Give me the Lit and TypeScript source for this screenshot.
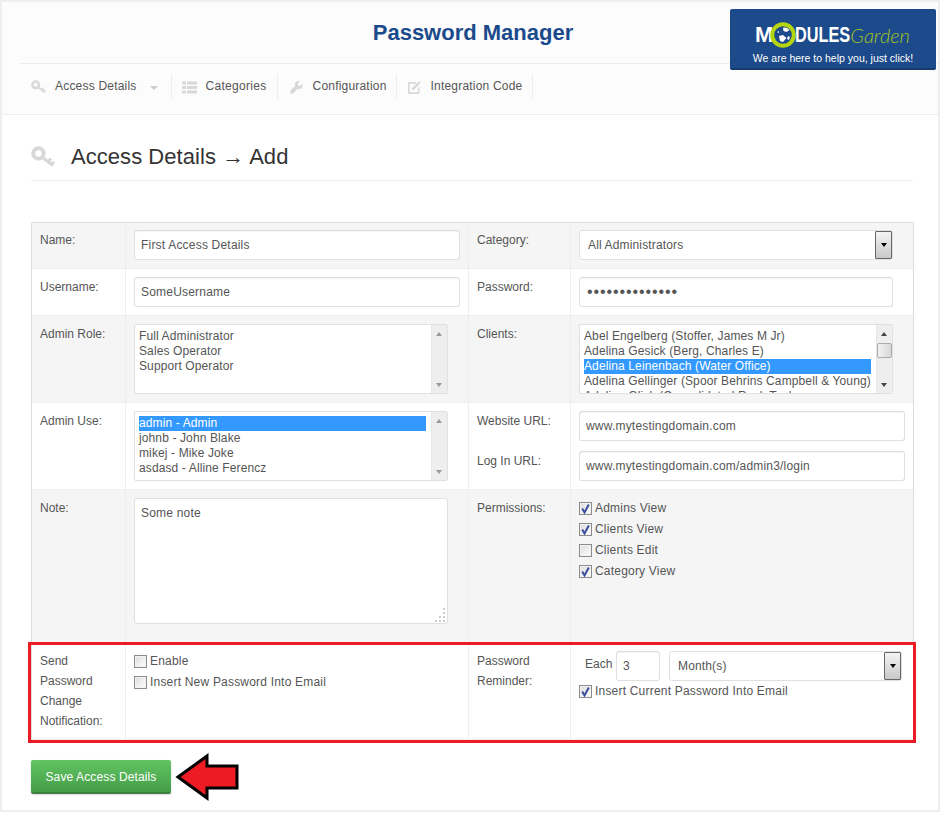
import { LitElement, html, css, svg } from "lit";
import { customElement } from "lit/decorators.js";

const keyIcon = (cls: string) => html`<svg class=${cls} viewBox="0 0 24 22" aria-hidden="true">
  <circle cx="7.5" cy="7.5" r="5.2" fill="none" stroke="currentColor" stroke-width="4"/>
  <path d="M11.5 11.5 L22 19.5 M17 15.5 L20 12.5 M20.5 18.2 L23 15.8" fill="none" stroke="currentColor" stroke-width="3"/>
</svg>`;
const listIcon = html`<svg class="nic" viewBox="0 0 15 12" aria-hidden="true"><path fill="currentColor" d="M0 0h4v3H0zM5 0h10v3H5zM0 4.5h4v3H0zM5 4.5h10v3H5zM0 9h4v3H0zM5 9h10v3H5z"/></svg>`;
const wrenchIcon = html`<svg class="nic" viewBox="0 0 14 14" aria-hidden="true"><path fill="currentColor" d="M13.6 2.8 11 5.3 8.9 4.9 8.5 2.8 11 .3C9.300-.3 7.500 0 6.400 1.200 5.200 2.400 5 4 5.500 5.400L.6 10.300c-.8.800-.8 2.100 0 2.900s2.100.8 2.900 0L8.400 8.400c1.500.5 3.100.2 4.200-.9 1.200-1.200 1.500-3.100 1-4.700z"/></svg>`;
const editIcon = html`<svg class="nic" viewBox="0 0 15 14" aria-hidden="true"><path fill="none" stroke="currentColor" stroke-width="1.800" d="M9 2H1.500v11h10.500V7"/><path fill="currentColor" d="M5 7.500 11.500.8l2 2L7 9.300l-2.500.6zM12.300 0l2 2 .7-.7-2-2z"/></svg>`;

const check = (on: boolean) => html`<span class="cb">${on
  ? svg`<svg viewBox="0 0 11 11" aria-hidden="true"><path d="M2.200 5.500 4.500 9.500 8.800 1.500" fill="none" stroke="#3b4f9e" stroke-width="2"/></svg>`
  : ""}</span>`;
const chk = (label: string, on: boolean) => html`<label class="chk">${check(on)}<span>${label}</span></label>`;

const up = html`<span class="up"></span>`;
const down = html`<span class="down"></span>`;
const selBtn = html`<span class="selbtn"><span class="caret"></span></span>`;

@customElement("app-root")
export class AppRoot extends LitElement {
  static styles = css`
    :host { display: block; width: 941px; height: 813px; background: #fff; overflow: hidden; position: relative;
      font: 12px/20px "Liberation Sans", Arial, sans-serif; color: #555; }
    * { box-sizing: border-box; }
    .panel { width: 940px; height: 812px; border: 2px solid #eee; background: #fff; }
    .top { background: #fcfcfc; border-bottom: 1px solid #eee; height: 113px; }
    .titlebar { height: 62px; margin-left: 18px; border-bottom: 1px solid #eee; padding: 12px 12px 0 0; text-align: center; }
    h1 { margin: 0; font-size: 22px; line-height: 38px; font-weight: 700; color: #1b4a8c; }
    nav { display: flex; margin-left: 18px; padding-top: 10px; align-items: flex-start; }
    .ni { display: flex; align-items: center; height: 26px; border-right: 1px solid #eee; padding: 0 10px 2px; color: #555; letter-spacing: .2px; }
    .ni.first { padding: 0 13px 2px 11px; }
    .ni.cat { letter-spacing: .3px; }
    .ni.wr { padding-left: 11px; padding-right: 9px; }
    .nic { width: 15px; height: 13px; color: #d8d8d8; margin-right: 9px; flex: none; margin-top: 2px; }
    .navkey { width: 15px; height: 14px; color: #d8d8d8; margin-right: 9px; flex: none; margin-top: 2px; }
    .navcaret { width: 0; height: 0; border: 4px solid transparent; border-top-color: #ccc; border-bottom: 0; margin: 3px 0 0 13px; }
    .logo { position: absolute; left: 730px; top: 9px; width: 206px; height: 61px; background: #1c4a8a; border-bottom: 2px solid #163a70; border-radius: 2px; color: #fff; overflow: hidden; }
    .logo .brand { display: flex; align-items: center; height: 26px; margin: 13px 0 0 25px; font: 700 22px/26px "Liberation Sans", sans-serif; }
    .logo .ring { width: 26px; height: 26px; flex: none; margin: 0 -1px 0 -3px; position: relative; }
    .logo .mods { display: block; width: 54px; transform: scaleX(.74); transform-origin: left center; white-space: nowrap; }
    .logo .gard { font: italic 300 20px/26px Lato, sans-serif; color: #a3c41d; margin-left: 1px; }
    .logo .tag { text-align: center; font-size: 10.500px; line-height: 14px; margin-top: 3px; }
    .heading { display: flex; align-items: flex-start; margin: 0 25px 0 29px; height: 66px; padding-top: 27px; border-bottom: 1px solid #eee; }
    .hkey { width: 24px; height: 22px; color: #d8d8d8; margin: 4px 16px 0 0; flex: none; }
    h2 { margin: 0; font-size: 22px; font-weight: 400; color: #333; line-height: 30px; letter-spacing: .05px; }
    .tbl { display: grid; grid-template-columns: 94px 343px 102px 342px; grid-template-rows: 46px 47px 87px 87px 154px 96px;
      width: 883px; margin: 41px 0 0 29px; border: 1px solid #ddd; border-bottom: 0; border-radius: 2px 2px 0 0; }
    .c { border-right: 1px solid #eee; border-bottom: 1px solid #eee; padding: 8px; min-width: 0; }
    .c:nth-child(4n) { border-right: 0; }
    .g { background: #f5f5f5; }
    .r1 { padding-top: 7px; }
    .r6 { padding-top: 7px; }
    input.t { display: block; width: 326px; height: 30px; border: 1px solid #e0e0e0; border-top-color: #ddd; border-radius: 3px; background: #fff;
      box-shadow: inset 0 1px 1px rgba(0,0,0,.05); font: 12px "Liberation Sans", Arial, sans-serif; color: #555; padding: 0 6px; outline: none; letter-spacing: .2px; }
    input.pw { width: 314px; font-size: 16px; letter-spacing: .9px; padding-left: 7px; }
    .sel { display: flex; align-items: center; justify-content: space-between; width: 314px; height: 30px; border: 1px solid #e0e0e0; border-radius: 3px; background: #fff; padding-left: 8px; color: #555; letter-spacing: .15px; }
    .selbtn { display: flex; align-items: center; justify-content: center; width: 17px; height: 28px; border: 1px solid #666; border-radius: 1px; background: linear-gradient(#f4f4f4, #c8c8c8); flex: none; }
    .caret { width: 0; height: 0; border: 3.500px solid transparent; border-top: 4px solid #000; border-bottom: 0; }
    .list { display: flex; width: 314px; height: 70px; border: 1px solid #e0e0e0; border-radius: 2px; background: #fff; overflow: hidden; }
    .opts { flex: 1; min-width: 0; padding: 4px 5px 0 4px; line-height: 15px; overflow: hidden; white-space: nowrap; letter-spacing: .12px; }
    .opts div { height: 15px; }
    .opts .on { background: #3399ff; color: #fff; }
    .sb { position: relative; flex: none; width: 16px; background: #eee; border-left: 1px solid #e6e6e6; }
    .up, .down { position: absolute; left: 4px; width: 0; height: 0; border: 3.500px solid transparent; }
    .up { top: 7px; border-top: 0; border-bottom: 4px solid #999; }
    .down { bottom: 6px; border-bottom: 0; border-top: 4px solid #999; }
    .sb.active .up { border-bottom-color: #444; }
    .sb.active .down { border-top-color: #444; }
    .thumb { position: absolute; left: 0; top: 18px; width: 15px; height: 15px; border: 1px solid #aaa; border-radius: 2px; background: linear-gradient(90deg, #f2f2f2, #d8d8d8); }
    .ta { display: block; position: relative; width: 314px; height: 126px; border: 1px solid #e0e0e0; border-radius: 3px; background: #fff; padding: 4px 6px; letter-spacing: .2px; }
    .grip { position: absolute; right: 1px; bottom: 1px; width: 12px; height: 14px; }
    .urlgap { height: 10px; }
    .lgap { height: 20px; }
    .chk { display: flex; align-items: center; height: 21px; padding-bottom: 2px; letter-spacing: .2px; }
    .cb { display: block; width: 13px; height: 13px; border: 1px solid #8c8c8c; background: linear-gradient(135deg, #dcdcdc, #fff); box-shadow: inset 0 0 0 1px #f2f2f2; margin-right: 3px; flex: none; margin-top: 2px; }
    .cb svg { display: block; width: 11px; height: 11px; }
    .each { display: flex; align-items: flex-start; padding-left: 6px; height: 30px; }
    .each .lb { width: 31px; line-height: 26px; }
    .each input.t { width: 44px; height: 30px; padding: 0 6px; }
    .each .sel { width: 233px; margin-left: 9px; }
    .foot { margin: 20px 0 0 29px; }
    button { display: block; width: 140px; height: 34px; border: 0; border-bottom: 2px solid #3d8040; border-radius: 2px; background: linear-gradient(#62c462, #449d48); color: #fff; font: 12px "Liberation Sans", Arial, sans-serif; letter-spacing: .12px; padding: 2px 0 0; box-shadow: 0 1px 2px rgba(0,0,0,.15); }
    .redbox { position: absolute; left: 28px; top: 642px; width: 888px; height: 101px; border: 3px solid #ed1c24; pointer-events: none; }
    .arrow { position: absolute; left: 175px; top: 752px; width: 66px; height: 50px; }
  `;

  render() {
    return html`
      <div class="panel">
        <div class="top">
          <div class="titlebar"><h1>Password Manager</h1></div>
          <nav>
            <a class="ni first">${keyIcon("navkey")}Access Details<span class="navcaret"></span></a>
            <a class="ni cat">${listIcon}Categories</a>
            <a class="ni wr">${wrenchIcon}Configuration</a>
            <a class="ni">${editIcon}Integration Code</a>
          </nav>
        </div>
        <div class="heading">${keyIcon("hkey")}<h2>Access Details → Add</h2></div>
        <div class="tbl">
          <div class="c g r1">Name:</div>
          <div class="c g r1"><input class="t" value="First Access Details"></div>
          <div class="c g r1">Category:</div>
          <div class="c g r1"><div class="sel">All Administrators${selBtn}</div></div>

          <div class="c">Username:</div>
          <div class="c"><input class="t" value="SomeUsername"></div>
          <div class="c">Password:</div>
          <div class="c"><input class="t pw" type="password" value="12345678901234"></div>

          <div class="c g">Admin Role:</div>
          <div class="c g"><div class="list"><div class="opts"><div>Full Administrator</div><div>Sales Operator</div><div>Support Operator</div></div><div class="sb">${up}${down}</div></div></div>
          <div class="c g">Clients:</div>
          <div class="c g"><div class="list"><div class="opts"><div>Abel Engelberg (Stoffer, James M Jr)</div><div>Adelina Gesick (Berg, Charles E)</div><div class="on">Adelina Leinenbach (Water Office)</div><div>Adelina Gellinger (Spoor Behrins Campbell &amp; Young)</div><div>Adelina Glick (Consolidated Rock Tool</div></div><div class="sb active">${up}<div class="thumb"></div>${down}</div></div></div>

          <div class="c">Admin Use:</div>
          <div class="c"><div class="list"><div class="opts"><div class="on">admin - Admin</div><div>johnb - John Blake</div><div>mikej - Mike Joke</div><div>asdasd - Alline Ferencz</div></div><div class="sb">${up}${down}</div></div></div>
          <div class="c">Website URL:<div class="lgap"></div>Log In URL:</div>
          <div class="c"><input class="t" value="www.mytestingdomain.com"><div class="urlgap"></div><input class="t" value="www.mytestingdomain.com/admin3/login"></div>

          <div class="c g">Note:</div>
          <div class="c g"><div class="ta">Some note
            <svg class="grip" viewBox="0 0 12 14" aria-hidden="true"><path fill="#ccc" d="M9 0h2v2H9zM9 4h2v2H9zM9 8h2v2H9zM9 12h2v2H9zM5 8h2v2H5zM5 12h2v2H5zM1 12h2v2H1z"/></svg>
          </div></div>
          <div class="c g">Permissions:</div>
          <div class="c g">${chk("Admins View", true)}${chk("Clients View", true)}${chk("Clients Edit", false)}${chk("Category View", true)}</div>

          <div class="c r6">Send<br>Password<br>Change<br>Notification:</div>
          <div class="c r6">${chk("Enable", false)}${chk("Insert New Password Into Email", false)}</div>
          <div class="c r6">Password<br>Reminder:</div>
          <div class="c r6">
            <div class="each"><span class="lb">Each</span><input class="t" value="3"><div class="sel">Month(s)${selBtn}</div></div>
            ${chk("Insert Current Password Into Email", true)}
          </div>
        </div>
        <div class="foot"><button>Save Access Details</button></div>
      </div>
      <div class="logo">
        <div class="brand"><span>M</span>
          <svg class="ring" viewBox="0 0 26 26" aria-hidden="true">
            <circle cx="13" cy="13" r="10.800" fill="#1c4a8a" stroke="#b5d50f" stroke-width="4"/>
            <path fill="#fff" d="M13 6c2-1 5 0 6.500 2l-3 2-3-1zM9 14l4-1 3.500 3-3.500 4-3-1zM18 14l2 1-1 3-2-1zM7 10l2-1v2z"/>
          </svg>
          <span class="mods">DULES</span><span class="gard">Garden</span></div>
        <div class="tag">We are here to help you, just click!</div>
      </div>
      <div class="redbox"></div>
      <svg class="arrow" viewBox="0 0 66 50" aria-hidden="true"><path d="M3 25 L32 4 V14 H62 V36 H32 V46 Z" fill="#ed1c24" stroke="#000" stroke-width="3"/></svg>
    `;
  }
}
